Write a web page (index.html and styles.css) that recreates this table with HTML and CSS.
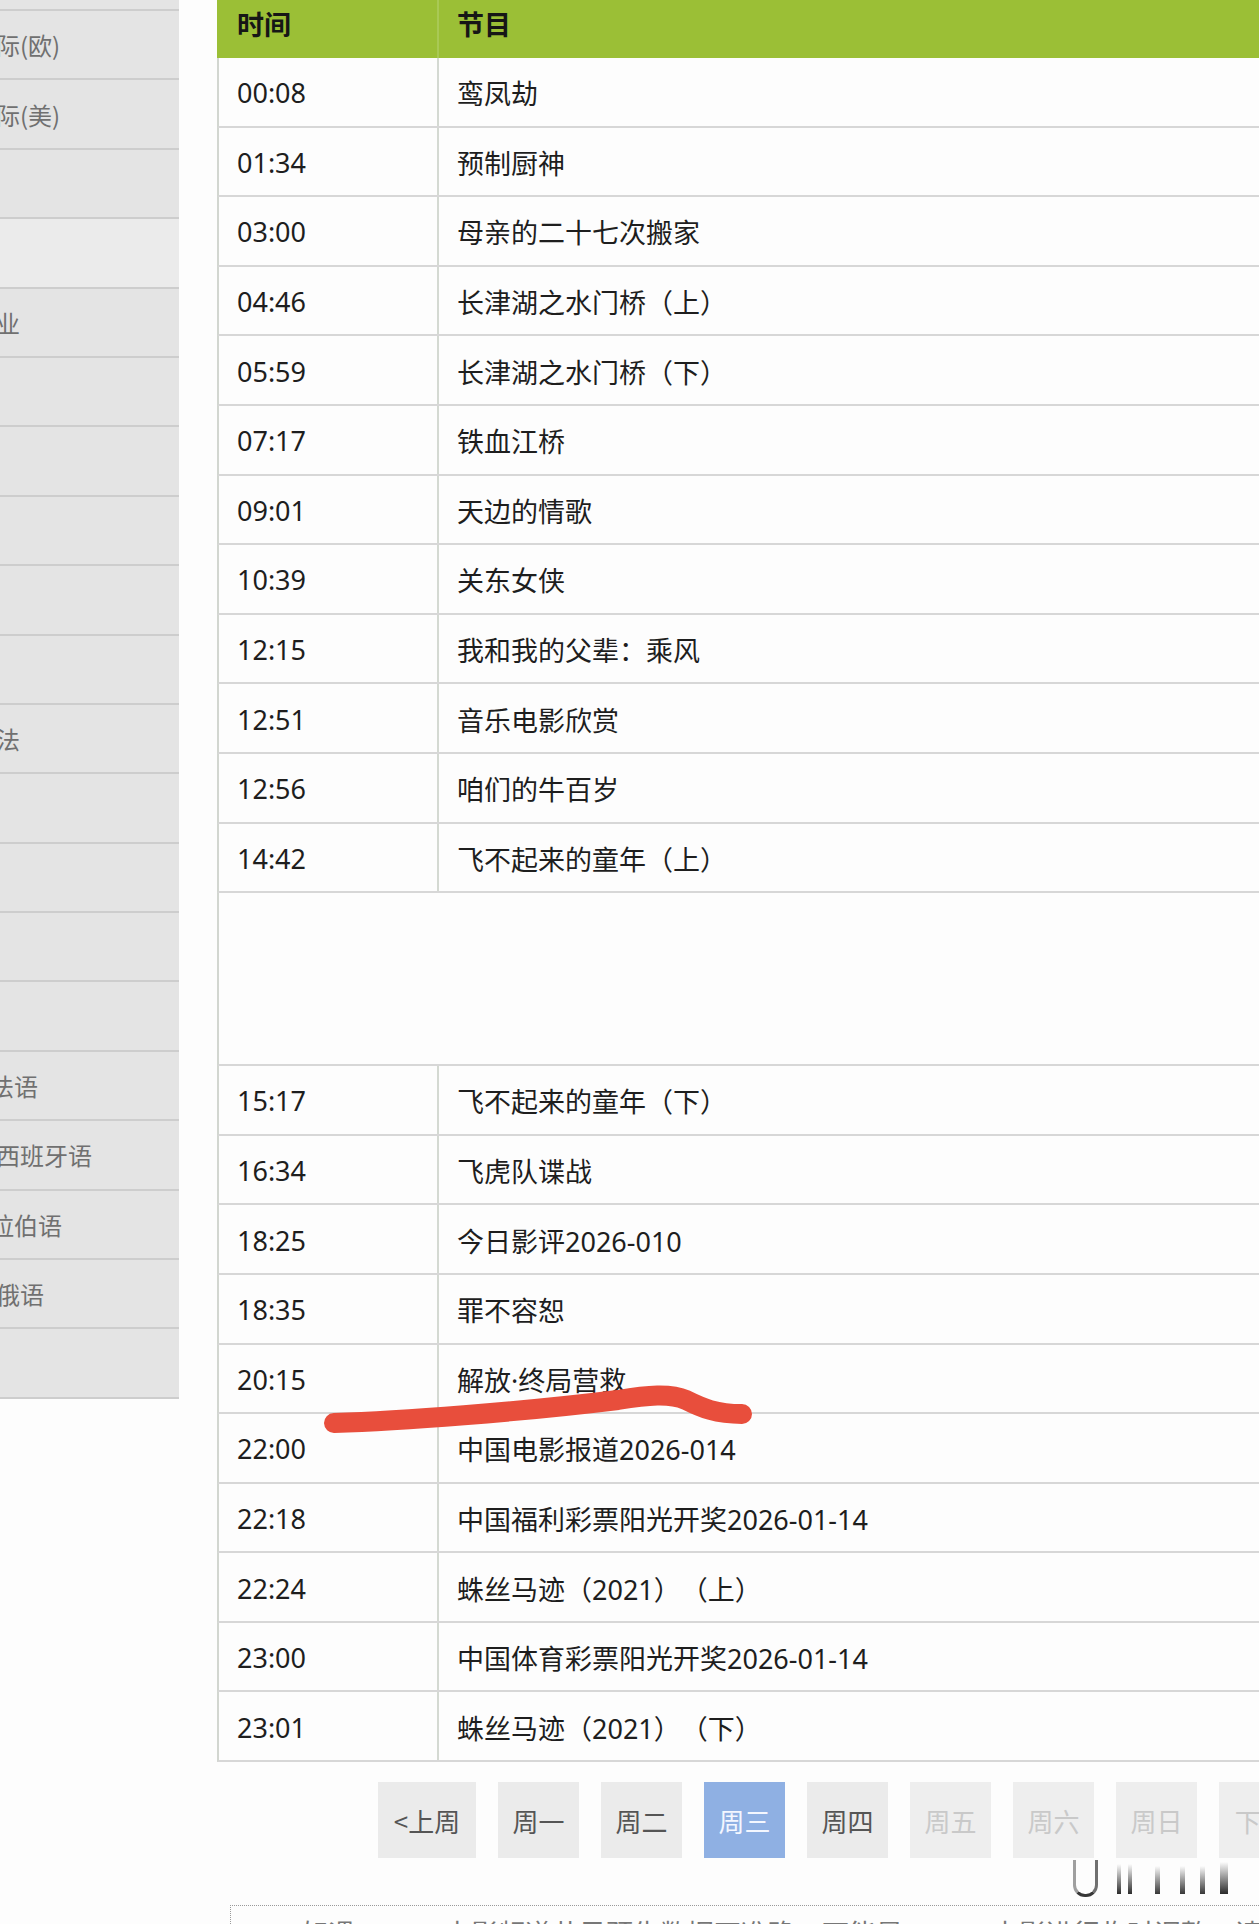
FILE: index.html
```html
<!DOCTYPE html>
<html lang="zh-CN">
<head>
<meta charset="utf-8">
<title>CCTV-6 电影频道节目表</title>
<link rel="stylesheet" href="styles.css">
</head>
<body>
<div class="page">
  <aside class="side">
    <div class="side-top"></div>
    <div class="side-item"><span class="lbl">际(欧)</span></div>
    <div class="side-item"><span class="lbl">际(美)</span></div>
    <div class="side-item"></div>
    <div class="side-item on"></div>
    <div class="side-item"><span class="lbl">业</span></div>
    <div class="side-item"></div>
    <div class="side-item"></div>
    <div class="side-item"></div>
    <div class="side-item"></div>
    <div class="side-item"></div>
    <div class="side-item"><span class="lbl">法</span></div>
    <div class="side-item"></div>
    <div class="side-item"></div>
    <div class="side-item"></div>
    <div class="side-item"></div>
    <div class="side-item"><span class="lbl far">法语</span></div>
    <div class="side-item"><span class="lbl">西班牙语</span></div>
    <div class="side-item"><span class="lbl far">拉伯语</span></div>
    <div class="side-item"><span class="lbl">俄语</span></div>
    <div class="side-item"></div>
  </aside>

  <main class="main">
    <div class="sched">
      <div class="row head"><div class="cell time">时间</div><div class="cell prog">节目</div></div>
      <div class="row"><div class="cell time">00:08</div><div class="cell prog">鸾凤劫</div></div>
      <div class="row"><div class="cell time">01:34</div><div class="cell prog">预制厨神</div></div>
      <div class="row"><div class="cell time">03:00</div><div class="cell prog">母亲的二十七次搬家</div></div>
      <div class="row"><div class="cell time">04:46</div><div class="cell prog">长津湖之水门桥（上）</div></div>
      <div class="row"><div class="cell time">05:59</div><div class="cell prog">长津湖之水门桥（下）</div></div>
      <div class="row"><div class="cell time">07:17</div><div class="cell prog">铁血江桥</div></div>
      <div class="row"><div class="cell time">09:01</div><div class="cell prog">天边的情歌</div></div>
      <div class="row"><div class="cell time">10:39</div><div class="cell prog">关东女侠</div></div>
      <div class="row"><div class="cell time">12:15</div><div class="cell prog">我和我的父辈：乘风</div></div>
      <div class="row"><div class="cell time">12:51</div><div class="cell prog">音乐电影欣赏</div></div>
      <div class="row"><div class="cell time">12:56</div><div class="cell prog">咱们的牛百岁</div></div>
      <div class="row"><div class="cell time">14:42</div><div class="cell prog">飞不起来的童年（上）</div></div>
      <div class="row blank"></div>
      <div class="row"><div class="cell time">15:17</div><div class="cell prog">飞不起来的童年（下）</div></div>
      <div class="row"><div class="cell time">16:34</div><div class="cell prog">飞虎队谍战</div></div>
      <div class="row"><div class="cell time">18:25</div><div class="cell prog">今日影评2026-010</div></div>
      <div class="row"><div class="cell time">18:35</div><div class="cell prog">罪不容恕</div></div>
      <div class="row"><div class="cell time">20:15</div><div class="cell prog">解放·终局营救</div></div>
      <div class="row"><div class="cell time">22:00</div><div class="cell prog">中国电影报道2026-014</div></div>
      <div class="row"><div class="cell time">22:18</div><div class="cell prog">中国福利彩票阳光开奖2026-01-14</div></div>
      <div class="row"><div class="cell time">22:24</div><div class="cell prog">蛛丝马迹（2021）（上）</div></div>
      <div class="row"><div class="cell time">23:00</div><div class="cell prog">中国体育彩票阳光开奖2026-01-14</div></div>
      <div class="row"><div class="cell time">23:01</div><div class="cell prog">蛛丝马迹（2021）（下）</div></div>
    </div>

    <nav class="weeks">
      <a class="wk wide">&lt;上周</a>
      <a class="wk">周一</a>
      <a class="wk">周二</a>
      <a class="wk active">周三</a>
      <a class="wk">周四</a>
      <a class="wk off">周五</a>
      <a class="wk off">周六</a>
      <a class="wk off">周日</a>
      <a class="wk wide off">下周&gt;</a>
    </nav>

    <div class="notice">
      <p>如遇CCTV-6电影频道节目预告数据不准确，可能是CCTV-6电影进行临时调整，请以实际播出为准。</p>
    </div>
  </main>
</div>

<svg class="mark" width="440" height="60" viewBox="0 0 440 60">
  <path d="M14 43 C80 41 200 32 298 20 C328 15 350 13 366 20 C382 28 396 34 422 34" fill="none" stroke="#e84e3c" stroke-width="20" stroke-linecap="round" stroke-linejoin="round"/>
</svg>

<div class="glitch"><span class="u"></span></div>
</body>
</html>
```

FILE: styles.css
```css
html, body {
  margin: 0;
  padding: 0;
  overflow: hidden;
  background: #fdfdfd;
}

body {
  position: relative;
  font-family: "Noto Sans", "Noto Sans CJK SC", sans-serif;
  color: #1e1e1e;
  text-spacing-trim: space-all;
}

.page {
  display: flex;
  align-items: flex-start;
  gap: 38px;
}

/* ---------- sidebar ---------- */
.side {
  width: 179px;
  flex: none;
  background: #e4e4e4;
  overflow: hidden;
}

.side-top {
  height: 9px;
  border-bottom: 2px solid #cdcdcd;
}

.side-item {
  height: 67.4px;
  border-bottom: 2px solid #cdcdcd;
  display: flex;
  align-items: center;
  font-size: 24px;
  color: #707070;
  white-space: nowrap;
  font-family: "Noto Sans CJK SC", sans-serif;
}

.side-item.on {
  background: #ebebeb;
}

.lbl {
  margin-left: -4px;
}

.lbl.far {
  margin-left: -10px;
}

/* ---------- schedule ---------- */
.main {
  width: 1100px;
  flex: none;
}

.sched {
  font-size: 27px;
}

.row {
  display: grid;
  grid-template-columns: 220px 1fr;
  box-sizing: border-box;
  height: 69.6px;
  border-left: 2px solid #d2d6d0;
  border-bottom: 2px solid #d7d7d7;
  background: #fdfdfd;
}

.row.head {
  height: 58px;
  background: #9bbf36;
  border-left-color: #9bbf36;
  border-bottom: 0;
  font-weight: 700;
  color: #161616;
}

.row.head .cell {
  padding-top: 0;
  padding-bottom: 12px;
}

.row.head .time {
  border-right-color: #a9c955;
}

.row.blank {
  display: block;
  height: 173px;
}

.cell {
  display: flex;
  align-items: center;
  padding-left: 18px;
  padding-top: 2px;
  white-space: nowrap;
  box-sizing: border-box;
}

.cell.time {
  border-right: 2px solid #d4d9d2;
}

/* ---------- week pager ---------- */
.weeks {
  display: flex;
  gap: 22px;
  margin-top: 20px;
  padding-left: 161px;
}

.wk {
  width: 81px;
  height: 76px;
  flex: none;
  display: flex;
  align-items: center;
  justify-content: center;
  background: #ebebeb;
  color: #555;
  font-size: 26px;
  font-family: "Noto Sans CJK SC", sans-serif;
  text-decoration: none;
}

.wk.wide {
  width: 98px;
}

.wk.active {
  background: #8fb0e3;
  color: #f4f7ff;
}

.wk.off {
  background: #eeeeee;
  color: #c9c9c9;
}

/* ---------- notice ---------- */
.notice {
  margin-top: 47px;
  margin-left: 13px;
  border-top: 1px dotted #9a9a9a;
  border-left: 1px dotted #9a9a9a;
  padding: 8px 0 0 70px;
}

.notice p {
  margin: 0;
  font-size: 27px;
  line-height: 40px;
  color: #777;
  white-space: nowrap;
}

/* ---------- overlays from the photo ---------- */
.mark {
  position: absolute;
  left: 320px;
  top: 1380px;
}

.glitch {
  position: absolute;
  left: 1070px;
  top: 1860px;
  width: 162px;
  height: 36px;
  background:
    linear-gradient(to bottom, rgba(20,20,20,0), rgba(20,20,20,0.9)) 47px 4px / 4px 30px no-repeat,
    linear-gradient(to bottom, rgba(20,20,20,0), rgba(20,20,20,0.9)) 58px 4px / 4px 30px no-repeat,
    linear-gradient(to bottom, rgba(20,20,20,0), rgba(20,20,20,0.85)) 85px 6px / 5px 28px no-repeat,
    linear-gradient(to bottom, rgba(20,20,20,0), rgba(20,20,20,0.85)) 110px 6px / 5px 28px no-repeat,
    linear-gradient(to bottom, rgba(20,20,20,0), rgba(20,20,20,0.85)) 130px 6px / 5px 28px no-repeat,
    linear-gradient(to bottom, rgba(20,20,20,0), rgba(20,20,20,0.9)) 150px 2px / 8px 32px no-repeat;
}

.glitch .u {
  position: absolute;
  left: 3px;
  top: 0;
  width: 19px;
  height: 34px;
  border: 3px solid rgba(20,20,20,0.85);
  border-top: 0;
  border-radius: 0 0 12px 12px;
  border-left-color: rgba(20,20,20,0.4);
  border-right-color: rgba(20,20,20,0.6);
}
```
